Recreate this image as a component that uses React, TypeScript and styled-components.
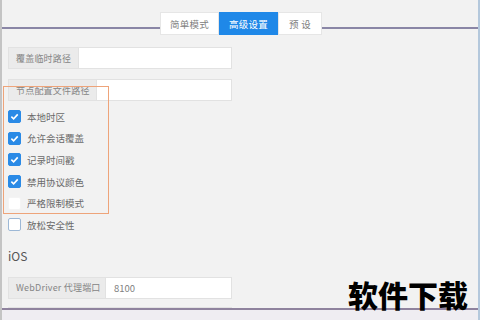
import React from "react";
import styled, { createGlobalStyle } from "styled-components";

const GlobalStyle = createGlobalStyle`
  html, body {
    margin: 0;
    padding: 0;
    background: #f2f2f2;
  }
  body {
    font-family: "Noto Sans CJK SC", "Noto Sans", sans-serif;
  }
`;

const Page = styled.div`
  position: relative;
  width: 480px;
  height: 320px;
  box-sizing: border-box;
  overflow: hidden;
  background: #f2f2f2;
  border-left: 2px solid #c4c4c4;
  border-right: 2px solid #b4c8dc;
  display: flex;
  flex-direction: column;
`;

const Content = styled.div`
  flex: 1;
  overflow: hidden;
  padding: 12px 0 0 6px;
`;

const TabBar = styled.div`
  display: flex;
  margin-left: -6px;
  margin-right: -2px;
  height: 23px;
`;

const TabLine = styled.div`
  flex: 1;
  height: 2px;
  margin-top: 15px;
  background: #8a86a6;
`;

const Tab = styled.div<{ $active?: boolean; $w: number }>`
  width: ${(p) => p.$w}px;
  height: 23px;
  display: flex;
  align-items: center;
  justify-content: center;
  font-size: 9.5px;
  letter-spacing: 0.3px;
  color: ${(p) => (p.$active ? "#ffffff" : "#808080")};
  background: ${(p) => (p.$active ? "#1f88e8" : "#ffffff")};
  border: 1px solid ${(p) => (p.$active ? "#1f88e8" : "#e6e6e6")};
  box-sizing: border-box;
`;

const Field = styled.div<{ $top: number }>`
  display: flex;
  width: 224px;
  height: 22px;
  margin-top: ${(p) => p.$top}px;
  box-sizing: border-box;
  border: 1px solid #e2e2e2;
  background: #fff;
`;

const FieldLabel = styled.div<{ $w: number }>`
  width: ${(p) => p.$w}px;
  flex-shrink: 0;
  background: #ebebeb;
  border-right: 1px solid #e2e2e2;
  color: #858585;
  font-size: 9px;
  letter-spacing: 0.2px;
  display: flex;
  align-items: center;
  padding-left: 7px;
  box-sizing: border-box;
  white-space: nowrap;
`;

const FieldValue = styled.div`
  flex: 1;
  display: flex;
  align-items: center;
  padding-left: 8px;
  font-size: 9.5px;
  color: #808080;
`;

const Checks = styled.div`
  margin-top: 5px;
  display: flex;
  flex-direction: column;
`;

const CheckRow = styled.div`
  height: 21.6px;
  display: flex;
  align-items: center;
  gap: 6px;
  font-size: 9.5px;
  color: #6a6a6a;
`;

const Box = styled.span<{ $checked?: boolean; $outlined?: boolean }>`
  width: 13px;
  height: 13px;
  box-sizing: border-box;
  border-radius: 2px;
  display: inline-flex;
  align-items: center;
  justify-content: center;
  background: ${(p) => (p.$checked ? "#2a8ae6" : "#ffffff")};
  border: 1px solid
    ${(p) => (p.$checked ? "#2a8ae6" : p.$outlined ? "#9db8d6" : "#f4f4f4")};
`;

const Heading = styled.div`
  margin-top: 12px;
  font-size: 12px;
  color: #555;
  height: 16px;
  line-height: 16px;
`;

const Footer = styled.div`
  height: 10px;
  flex-shrink: 0;
  border-top: 2px solid #8f839e;
  background: #efedf2;
  margin-left: -2px;
  margin-right: -2px;
`;

const Highlight = styled.div`
  position: absolute;
  left: 1px;
  top: 86px;
  width: 106px;
  height: 128px;
  box-sizing: border-box;
  border: 1.5px solid #eea47a;
  pointer-events: none;
`;

const Watermark = styled.div`
  position: absolute;
  right: 10px;
  bottom: 10px;
  font-family: "Noto Sans CJK SC", sans-serif;
  font-weight: 900;
  font-size: 30px;
  line-height: 32px;
  color: #000;
`;

const Check = () => (
  <svg width="9" height="9" viewBox="0 0 10 10">
    <path d="M1.5 5.2 L4 7.5 L8.6 2.6" fill="none" stroke="#fff" strokeWidth="1.8" />
  </svg>
);

const options = [
  { label: "本地时区", checked: true },
  { label: "允许会话覆盖", checked: true },
  { label: "记录时间戳", checked: true },
  { label: "禁用协议颜色", checked: true },
  { label: "严格限制模式", checked: false },
];

export default function App() {
  return (
    <Page>
      <GlobalStyle />
      <Content>
        <TabBar>
          <TabLine />
          <Tab $w={59}>简单模式</Tab>
          <Tab $w={59} $active>
            高级设置
          </Tab>
          <Tab $w={44}>预 设</Tab>
          <TabLine />
        </TabBar>
        <Field $top={12}>
          <FieldLabel $w={70}>覆盖临时路径</FieldLabel>
          <FieldValue />
        </Field>
        <Field $top={10}>
          <FieldLabel $w={88}>节点配置文件路径</FieldLabel>
          <FieldValue />
        </Field>
        <Checks>
          {options.map((o) => (
            <CheckRow key={o.label}>
              <Box $checked={o.checked}>{o.checked && <Check />}</Box>
              {o.label}
            </CheckRow>
          ))}
          <CheckRow>
            <Box $outlined />
            放松安全性
          </CheckRow>
        </Checks>
        <Heading>iOS</Heading>
        <Field $top={13}>
          <FieldLabel $w={97}>WebDriver 代理端口</FieldLabel>
          <FieldValue>8100</FieldValue>
        </Field>
        <Field $top={8}>
          <FieldLabel $w={88} />
          <FieldValue />
        </Field>
      </Content>
      <Footer />
      <Highlight />
      <Watermark>软件下载</Watermark>
    </Page>
  );
}
